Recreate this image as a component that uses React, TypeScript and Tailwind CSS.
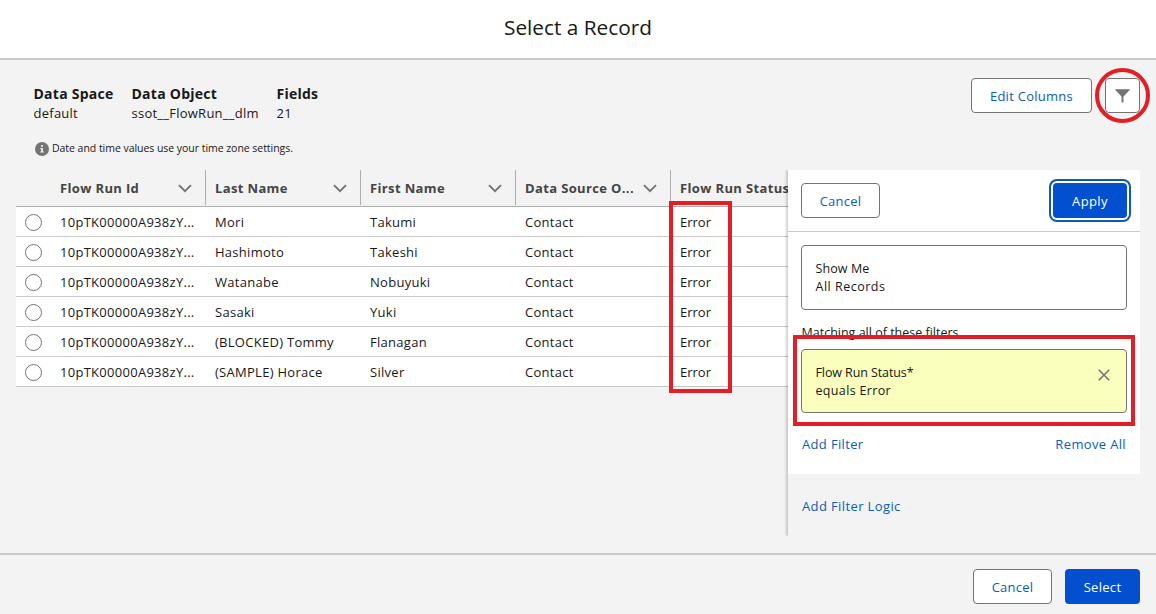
type RecordRow = {
  id: string;
  lastName: string;
  firstName: string;
  source: string;
  status: string;
};

const summary = [
  { label: "Data Space", value: "default", width: "w-[98px]" },
  { label: "Data Object", value: "ssot__FlowRun__dlm", width: "w-[145px]" },
  { label: "Fields", value: "21", width: "w-[60px]" },
];

const columns = [
  "Flow Run Id",
  "Last Name",
  "First Name",
  "Data Source O...",
  "Flow Run Status",
];

const rows: RecordRow[] = [
  { id: "10pTK00000A938zY...", lastName: "Mori", firstName: "Takumi", source: "Contact", status: "Error" },
  { id: "10pTK00000A938zY...", lastName: "Hashimoto", firstName: "Takeshi", source: "Contact", status: "Error" },
  { id: "10pTK00000A938zY...", lastName: "Watanabe", firstName: "Nobuyuki", source: "Contact", status: "Error" },
  { id: "10pTK00000A938zY...", lastName: "Sasaki", firstName: "Yuki", source: "Contact", status: "Error" },
  { id: "10pTK00000A938zY...", lastName: "(BLOCKED) Tommy", firstName: "Flanagan", source: "Contact", status: "Error" },
  { id: "10pTK00000A938zY...", lastName: "(SAMPLE) Horace", firstName: "Silver", source: "Contact", status: "Error" },
];

function ChevronIcon() {
  return (
    <svg width="14" height="9" viewBox="0 0 14 9" fill="none" className="mr-[0.5px] shrink-0">
      <path d="M1 1.2L7 7.2L13 1.2" stroke="#747474" strokeWidth="1.9" />
    </svg>
  );
}

function FilterIcon() {
  return (
    <svg width="15" height="14" viewBox="0 0 15 14" fill="#747474">
      <path d="M0.5 0.3H14.5C14.9 0.3 15 0.7 14.7 1L8.5 7.6V13C8.5 13.3 8.3 13.4 8.1 13.4H6.9C6.7 13.4 6.5 13.3 6.5 13V7.6L0.3 1C0 0.7 0.1 0.3 0.5 0.3Z" />
    </svg>
  );
}

function InfoIcon() {
  return (
    <svg width="14" height="14" viewBox="0 0 14 14">
      <circle cx="7" cy="7" r="7" fill="#747474" />
      <circle cx="7" cy="4" r="1.1" fill="#f3f3f3" />
      <path d="M5.4 6H7.9V9.5H8.8V10.6H5.3V9.5H6.2V7H5.4Z" fill="#f3f3f3" />
    </svg>
  );
}

function CloseIcon() {
  return (
    <svg width="12" height="12" viewBox="0 0 12 12" fill="none">
      <path d="M0.8 0.8L11.2 11.2M11.2 0.8L0.8 11.2" stroke="#747474" strokeWidth="1.6" />
    </svg>
  );
}

function FilterPanel() {
  return (
    <aside className="relative z-10 h-[366px] w-[352px] shrink-0 bg-[#f3f3f3] shadow-[-2px_0_2px_0_rgba(0,0,0,0.18)] [clip-path:inset(0_0_0_-6px)]">
      <div className="h-[304px] bg-white">
        <div className="flex h-[62px] items-center justify-between border-b border-[#c9c9c9] px-[13px]">
          <button className="h-[35px] w-[79px] rounded-[4px] border border-[#747474] bg-white pt-[2px] tracking-[0.25px] text-[#0b5cbb]">
            Cancel
          </button>
          <button className="h-[35px] w-[74px] rounded-[4px] bg-[#0250d0] pt-[2px] tracking-[0.4px] text-white shadow-[0_0_0_2px_#fff,0_0_0_4px_#0b5cab]">
            Apply
          </button>
        </div>

        <div className="px-[13px] pt-[13px]">
          <div className="flex h-[65px] flex-col justify-center rounded-[4px] border border-[#747474] pl-[13.5px] text-[12.5px] leading-[18px]">
            <p className="tracking-[0.1px]">Show Me</p>
            <p className="tracking-[0.5px]">All Records</p>
          </div>
          <p className="mt-[14px] h-[18px] pl-[0.5px] text-[12.5px] leading-[18px]">
            Matching all of these filters
          </p>
          <div className="mt-[7px] flex h-[64px] items-center justify-between rounded-[4px] border border-[#747474] bg-[#faffbd] pl-[13.5px] pr-[16px] text-[12.5px] leading-[18px]">
            <div className="pt-[2px]">
              <p className="tracking-[-0.1px]">Flow Run Status*</p>
              <p className="tracking-[0.34px]">equals Error</p>
            </div>
            <button className="mb-[13px]">
              <CloseIcon />
            </button>
          </div>
          <div className="mt-[22px] flex justify-between px-[1px] leading-[18px] tracking-[0.35px] text-[#0b5cbb]">
            <a>Add Filter</a>
            <a>Remove All</a>
          </div>
        </div>
      </div>
      <a className="block px-[14px] pt-[23px] leading-[18px] tracking-[0.38px] text-[#0b5cbb]">
        Add Filter Logic
      </a>
    </aside>
  );
}

export default function App() {
  return (
    <div className="relative flex h-[614px] w-[1156px] flex-col overflow-hidden bg-[#f3f3f3] font-['Open_Sans',sans-serif] text-[13px] text-[#181818]">
      <header className="flex h-[60px] shrink-0 items-center justify-center border-b-2 border-[#c9c9c9] bg-white pb-[5px]">
        <h1 className="text-[20.8px] leading-7">Select a Record</h1>
      </header>

      <main className="h-[493px] shrink-0 px-4">
        <div className="flex h-[76px] justify-between pt-[18px]">
          <dl className="flex pl-[17.5px] pt-[6px]">
            {summary.map((item) => (
              <div key={item.label} className={item.width}>
                <dt className="whitespace-nowrap text-[14px] font-bold leading-5 tracking-[0.25px]">
                  {item.label}
                </dt>
                <dd className="leading-[18px] tracking-[0.25px]">{item.value}</dd>
              </div>
            ))}
          </dl>
          <div className="flex gap-[13px]">
            <button className="h-[35px] w-[121px] rounded-[4px] border border-[#747474] bg-white pt-[2px] tracking-[0.27px] text-[#0b5cbb]">
              Edit Columns
            </button>
            <button className="flex h-[35px] w-[35px] items-center justify-center rounded-[4px] border border-[#747474] bg-white">
              <FilterIcon />
            </button>
          </div>
        </div>

        <div className="flex h-[34px] items-center gap-[3px] pb-[8px] pl-[19px] text-[10.5px] tracking-[-0.04px]">
          <InfoIcon />
          <span>Date and time values use your time zone settings.</span>
        </div>

        <div className="flex">
          <div className="w-[772px] shrink-0 overflow-hidden">
            <div className="flex h-[37px] w-[810px] border-b border-[#aeaeae] pl-[35px] font-bold tracking-[0.36px] text-[#444]">
              {columns.map((column) => (
                <div
                  key={column}
                  className="flex h-[35px] w-[155px] shrink-0 items-center justify-between border-r border-[#aeaeae] pl-[9px] pr-[13px] pt-[2px]"
                >
                  <span className="whitespace-nowrap">{column}</span>
                  <ChevronIcon />
                </div>
              ))}
            </div>
            {rows.map((row, index) => (
              <div
                key={index}
                className="flex h-[30px] w-[810px] items-center border-b border-[#c9c9c9] bg-white pt-[2px] tracking-[0.28px]"
              >
                <div className="w-[35px] shrink-0 pl-[9px]">
                  <div className="h-[17px] w-[17px] rounded-full border border-[#747474] bg-white" />
                </div>
                <div className="w-[155px] shrink-0 pl-[9px]">{row.id}</div>
                <div className="w-[155px] shrink-0 pl-[9px]">{row.lastName}</div>
                <div className="w-[155px] shrink-0 pl-[9px]">{row.firstName}</div>
                <div className="w-[155px] shrink-0 pl-[9px]">{row.source}</div>
                <div className="w-[155px] shrink-0 pl-[9px] tracking-normal">{row.status}</div>
              </div>
            ))}
          </div>
          <FilterPanel />
        </div>
      </main>

      <footer className="flex h-[61px] shrink-0 gap-[13px] border-t-2 border-[#c9c9c9] pl-[973px] pt-[14px]">
        <button className="h-[35px] w-[79px] rounded-[4px] border border-[#747474] bg-white pt-[2px] tracking-[0.25px] text-[#0b5cbb]">
          Cancel
        </button>
        <button className="h-[35px] w-[75px] rounded-[4px] bg-[#0250d0] pt-[2px] tracking-[0.3px] text-white">
          Select
        </button>
      </footer>

      {/* Callouts */}
      <div className="absolute left-[1095px] top-[68px] z-20 h-[55px] w-[55px] rounded-full border-4 border-[#e01f27]" />
      <div className="absolute left-[669px] top-[201px] z-20 h-[192px] w-[63px] border-4 border-[#e01f27]" />
      <div className="absolute left-[793px] top-[335px] z-20 h-[91px] w-[342px] border-4 border-[#e01f27]" />
    </div>
  );
}
